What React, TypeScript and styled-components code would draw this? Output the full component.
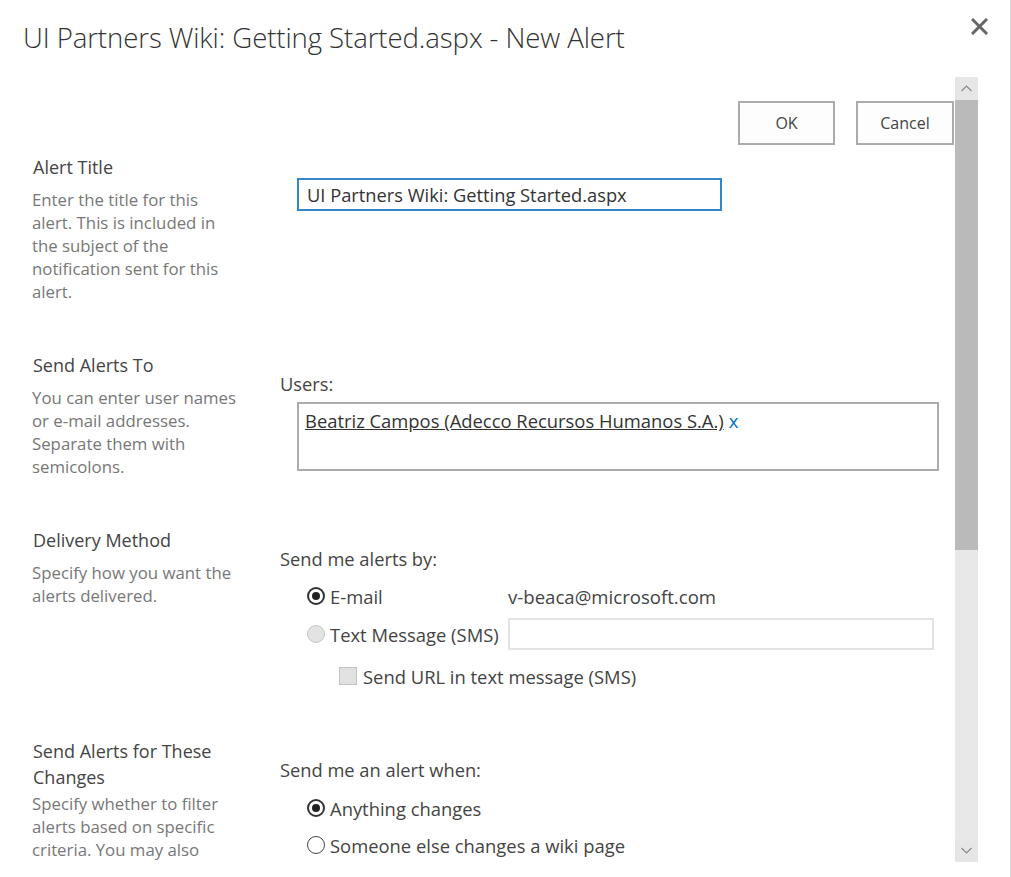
import React from "react";
import styled, { createGlobalStyle } from "styled-components";

const Global = createGlobalStyle`
  html, body { margin: 0; padding: 0; background: #fff; }
  body {
    font-family: "Open Sans", "Noto Sans", "Liberation Sans", sans-serif;
    color: #444;
  }
  * { box-sizing: border-box; }
`;

const Dialog = styled.div`
  width: 1011px;
  height: 877px;
  border-right: 1px solid #d9d9d9;
  background: #fff;
  overflow: hidden;
  display: flex;
  flex-direction: column;
`;

const Header = styled.header`
  height: 77px;
  flex: none;
  display: flex;
  align-items: flex-start;
  justify-content: space-between;
  padding: 17px 22px 0 23px;
`;

const Title = styled.h1`
  margin: 1px 0 0;
  font-size: 27.6px;
  line-height: 38px;
  font-weight: 300;
  color: #333;
  letter-spacing: -0.1px;
`;

const CloseButton = styled.button`
  border: 0;
  background: none;
  padding: 0;
  width: 17px;
  height: 17px;
  margin-top: 1px;
  display: flex;
  cursor: pointer;
`;

const Body = styled.div`
  height: 785px;
  flex: none;
  display: flex;
  padding-right: 32px;
`;

const Content = styled.div`
  flex: 1;
  overflow: hidden;
  padding-left: 32px;
`;

const ButtonBar = styled.div`
  display: flex;
  justify-content: flex-end;
  gap: 21px;
  margin-top: 24px;
  padding-right: 1px;
`;

const Button = styled.button<{ $w: number }>`
  width: ${(p) => p.$w}px;
  height: 44px;
  border: 2px solid #ababab;
  background: #fdfdfd;
  font-family: inherit;
  font-size: 16px;
  color: #444;
  padding: 0;
  cursor: pointer;
`;

const Sections = styled.div`
  margin-top: 9px;
  display: flex;
  flex-direction: column;
  gap: 49px;
`;

const Section = styled.section`
  display: grid;
  grid-template-columns: 248px 1fr;
`;

const LeftCol = styled.div`
  padding-left: 1px;
`;

const SectionTitle = styled.h2`
  margin: 0;
  font-size: 18px;
  line-height: 26px;
  font-weight: 400;
  color: #444;
  max-width: 215px;
`;

const Description = styled.p<{ $gap?: number }>`
  margin: ${(p) => p.$gap ?? 8}px 0 0 -1px;
  font-size: 16.8px;
  line-height: 23px;
  color: #777;
  max-width: 235px;
`;

const RightCol = styled.div`
  padding-top: 20px;
`;

const FieldLabel = styled.div`
  font-size: 18.3px;
  line-height: 24px;
  color: #444;
`;

const TitleInput = styled.input`
  display: block;
  margin: 4px 0 0 17px;
  width: 425px;
  height: 33px;
  border: 2px solid #3585c9;
  padding: 0 8px;
  font-family: inherit;
  font-size: 18.3px;
  color: #333;
  outline: none;
`;

const UsersBox = styled.div`
  margin: 6px 0 0 17px;
  width: 642px;
  height: 69px;
  border: 2px solid #ababab;
  padding: 5px 6px;
  font-size: 18.4px;
  line-height: 24px;
`;

const UserLink = styled.a`
  color: #333;
  text-decoration: underline;
`;

const RemoveUser = styled.span`
  color: #0072c6;
  margin-left: 5px;
`;

const OptionGrid = styled.div`
  margin: 10px 0 0 27px;
  padding-bottom: 3px;
  display: grid;
  grid-template-columns: 201px 426px;
  row-gap: 7px;
  align-items: center;
`;

const OptionList = styled.div`
  margin: 11px 0 0 27px;
  display: flex;
  flex-direction: column;
  gap: 7px;
`;

const Option = styled.label`
  height: 30px;
  display: flex;
  align-items: center;
  gap: 5px;
  font-size: 18.4px;
  color: #444;
  white-space: nowrap;
`;

const Radio = styled.span<{ $checked?: boolean; $disabled?: boolean }>`
  width: 18px;
  height: 18px;
  flex: none;
  border-radius: 50%;
  border: ${(p) => (p.$disabled ? "1px solid #c6c6c6" : p.$checked ? "2px solid #333" : "1.5px solid #444")};
  background: ${(p) => (p.$disabled ? "#e3e3e3" : "#fff")};
  display: flex;
  align-items: center;
  justify-content: center;
  &::after {
    content: "";
    display: ${(p) => (p.$checked ? "block" : "none")};
    width: 8px;
    height: 8px;
    border-radius: 50%;
    background: #222;
  }
`;

const Value = styled.div`
  height: 30px;
  display: flex;
  align-items: center;
  font-size: 18.6px;
  color: #444;
`;

const SmsInput = styled.input`
  width: 426px;
  height: 32px;
  border: 2px solid #e3e3e3;
  background: #fff;
  padding: 0 6px;
  font-family: inherit;
  font-size: 16px;
  outline: none;
`;

const CheckRow = styled.label`
  grid-column: 1 / -1;
  margin: 9px 0 0 32px;
  height: 20px;
  display: flex;
  align-items: center;
  gap: 6px;
  font-size: 18.4px;
  color: #444;
  white-space: nowrap;
`;

const CheckBox = styled.span`
  width: 18px;
  height: 18px;
  flex: none;
  border: 1px solid #c4c4c4;
  background: #e2e2e2;
`;

const Scrollbar = styled.div`
  width: 23px;
  flex: none;
  display: flex;
  flex-direction: column;
  background: #e8e8e8;
`;

const ScrollButton = styled.div`
  height: 23px;
  flex: none;
  display: flex;
  align-items: center;
  justify-content: center;
  background: #e6e6e6;
`;

const Thumb = styled.div`
  height: 450px;
  flex: none;
  background: #bababa;
`;

const Track = styled.div`
  flex: 1;
`;

const Chevron = ({ up }: { up?: boolean }) => (
  <svg width="11" height="7" viewBox="0 0 11 7">
    <polyline
      points={up ? "0.5,6 5.5,1 10.5,6" : "0.5,1 5.5,6 10.5,1"}
      fill="none"
      stroke="#8a8a8a"
      strokeWidth="1.2"
    />
  </svg>
);

export default function App() {
  return (
    <>
      <Global />
      <Dialog>
        <Header>
          <Title>UI Partners Wiki: Getting Started.aspx - New Alert</Title>
          <CloseButton aria-label="Close">
            <svg width="17" height="17" viewBox="0 0 17 17">
              <path d="M2 2 L15 15 M15 2 L2 15" stroke="#666" strokeWidth="3" strokeLinecap="square" />
            </svg>
          </CloseButton>
        </Header>
        <Body>
          <Content>
            <ButtonBar>
              <Button $w={97}>OK</Button>
              <Button $w={98}>Cancel</Button>
            </ButtonBar>
            <Sections>
              <Section>
                <LeftCol>
                  <SectionTitle>Alert Title</SectionTitle>
                  <Description>
                    Enter the title for this<br />
                    alert. This is included in<br />
                    the subject of the<br />
                    notification sent for this<br />
                    alert.
                  </Description>
                </LeftCol>
                <RightCol>
                  <TitleInput defaultValue="UI Partners Wiki: Getting Started.aspx" />
                </RightCol>
              </Section>
              <Section>
                <LeftCol>
                  <SectionTitle>Send Alerts To</SectionTitle>
                  <Description>
                    You can enter user names<br />
                    or e-mail addresses.<br />
                    Separate them with<br />
                    semicolons.
                  </Description>
                </LeftCol>
                <RightCol>
                  <FieldLabel>Users:</FieldLabel>
                  <UsersBox>
                    <UserLink>Beatriz Campos (Adecco Recursos Humanos S.A.)</UserLink>
                    <RemoveUser>x</RemoveUser>
                  </UsersBox>
                </RightCol>
              </Section>
              <Section>
                <LeftCol>
                  <SectionTitle>Delivery Method</SectionTitle>
                  <Description>
                    Specify how you want the<br />
                    alerts delivered.
                  </Description>
                </LeftCol>
                <RightCol>
                  <FieldLabel>Send me alerts by:</FieldLabel>
                  <OptionGrid>
                    <Option>
                      <Radio $checked />
                      E-mail
                    </Option>
                    <Value>v-beaca@microsoft.com</Value>
                    <Option>
                      <Radio $disabled />
                      Text Message (SMS)
                    </Option>
                    <SmsInput />
                    <CheckRow>
                      <CheckBox />
                      Send URL in text message (SMS)
                    </CheckRow>
                  </OptionGrid>
                </RightCol>
              </Section>
              <Section>
                <LeftCol>
                  <SectionTitle>Send Alerts for These Changes</SectionTitle>
                  <Description $gap={2}>
                    Specify whether to filter<br />
                    alerts based on specific<br />
                    criteria. You may also
                  </Description>
                </LeftCol>
                <RightCol>
                  <FieldLabel>Send me an alert when:</FieldLabel>
                  <OptionList>
                    <Option>
                      <Radio $checked />
                      Anything changes
                    </Option>
                    <Option>
                      <Radio />
                      Someone else changes a wiki page
                    </Option>
                  </OptionList>
                </RightCol>
              </Section>
            </Sections>
          </Content>
          <Scrollbar>
            <ScrollButton>
              <Chevron up />
            </ScrollButton>
            <Thumb />
            <Track />
            <ScrollButton>
              <Chevron />
            </ScrollButton>
          </Scrollbar>
        </Body>
      </Dialog>
    </>
  );
}
